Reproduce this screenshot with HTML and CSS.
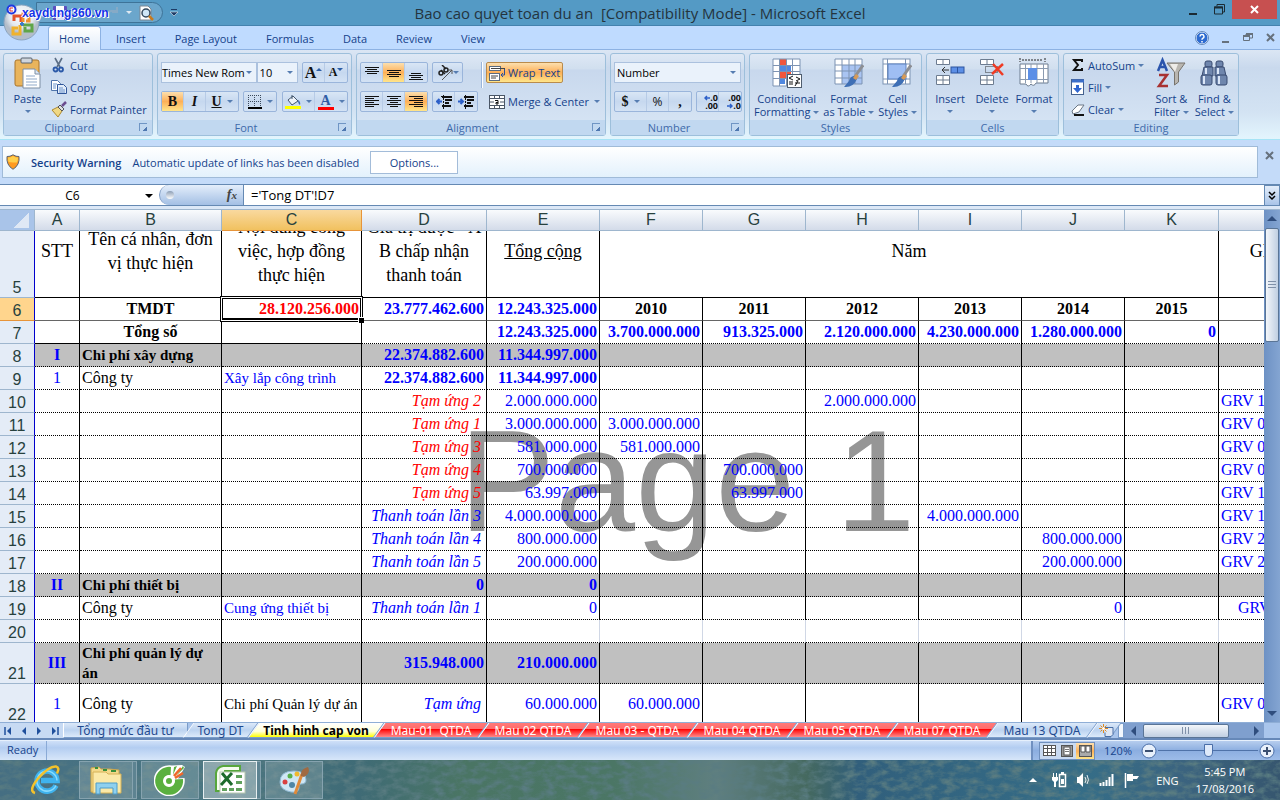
FILE: index.html
```
<!DOCTYPE html>
<html lang="en">
<head>
  <meta charset="UTF-8" />
  <meta name="viewport" content="width=device-width, initial-scale=1.0" />
  <title>Bao cao quyet toan du an - Microsoft Excel</title>
  <link rel="stylesheet" href="styles.css">
</head>
<body>

  <!-- Title bar -->
  <header class="titlebar">
    <div class="qat">
      <button aria-label="Save"><svg width="16" height="16" viewBox="0 0 16 16"><rect x="1" y="1" width="14" height="14" rx="1" fill="#5b4fc0"/><rect x="4" y="1" width="8" height="6" fill="#fff"/><rect x="4" y="10" width="8" height="5" fill="#d9ddf2"/></svg></button>
      <button aria-label="Undo"><svg width="16" height="16" viewBox="0 0 16 16"><path d="M4 7h6a3 3 0 0 1 0 6M7 3L3 7l4 4" fill="none" stroke="#6f9cc4" stroke-width="2"/></svg></button>
      <button aria-label="Redo"><svg width="16" height="16" viewBox="0 0 16 16"><path d="M13 6H7a4 4 0 0 0-2 7M13 2v5H8" fill="none" stroke="#86aac6" stroke-width="2"/></svg></button>
      <i class="arrow pale"></i>
      <button aria-label="Print preview"><svg width="16" height="16" viewBox="0 0 16 16"><path d="M2 1h8l3 3v11H2z" fill="#fff" stroke="#7b8794"/><circle cx="8" cy="8" r="4" fill="#cfe6f7" stroke="#34495e" stroke-width="1.5"/><path d="M11 11l4 4" stroke="#c87a1c" stroke-width="2.5"/></svg></button>
    </div>
    <button class="qat-more" aria-label="Customize Quick Access Toolbar"><svg width="8" height="8"><path d="M1 .5h6" stroke="#1d3b66"/><path d="M0 3h8L4 7z" fill="#1d3b66" stroke="#fff" stroke-width=".5"/></svg></button>
    <h1>Bao cao quyet toan du an &nbsp;[Compatibility Mode] - Microsoft Excel</h1>
    <div class="win-buttons">
      <button aria-label="Minimize"><svg width="10" height="12"><path d="M1 10h8" stroke="#1b2a33" stroke-width="2"/></svg></button>
      <button aria-label="Restore"><svg width="11" height="11"><path d="M3 2V.5h7.500V8H9M.5 3h8v7h-8z" fill="none" stroke="#1b2a33"/><path d="M0 3.500h9" stroke="#1b2a33" stroke-width="2"/></svg></button>
      <button class="close" aria-label="Close"><svg width="9" height="9"><path d="M1 1l7 7M8 1L1 8" stroke="#fff" stroke-width="2"/></svg></button>
    </div>
  </header>

  <button class="orb" aria-label="Office Button">
    <svg width="37" height="37" viewBox="0 0 37 37">
      <defs><radialGradient id="orbFill" cx=".5" cy=".3"><stop offset="0" stop-color="#fff"/><stop offset=".7" stop-color="#e3e8ee"/><stop offset="1" stop-color="#b3bdc9"/></radialGradient></defs>
      <circle cx="18.500" cy="18.500" r="17.500" fill="url(#orbFill)" stroke="#8ba4bf"/>
      <g fill="none" stroke-width="3">
        <path d="M11 17v-5h7v6" stroke="#e2542a"/><path d="M20 18v-8h6v7h-3" stroke="#f0922c"/>
        <path d="M17 21v9H10v-6h5" stroke="#f0b22c"/><path d="M20 21h9v6h-7v-4" stroke="#5fa548"/>
      </g>
      <path d="M17 20h4M19 18v4" stroke="#3d7cc9" stroke-width="2"/>
    </svg>
  </button>
  <div class="site-mark"><svg width="11" height="11" viewBox="0 0 11 11"><circle cx="5.500" cy="5.500" r="4" fill="#fff" stroke="#2038e0" stroke-width="2"/><path d="M7 4H4v3h3" fill="none" stroke="#e03030"/></svg><span>xaydung360.vn</span></div>

  <!-- Ribbon tabs -->
  <nav class="ribbon-tabs">
    <button class="active">Home</button>
    <button>Insert</button>
    <button>Page Layout</button>
    <button>Formulas</button>
    <button>Data</button>
    <button>Review</button>
    <button>View</button>
    <div class="doc-buttons">
      <button aria-label="Help"><svg width="14" height="14" viewBox="0 0 14 14"><circle cx="7" cy="7" r="6" fill="#2d6bd0" stroke="#eaf3ff"/><circle cx="7" cy="7" r="6.500" fill="none" stroke="#4a72a8" stroke-width=".8"/><path d="M5 5.500a2 2 0 1 1 2.500 2Q7 8 7 8.800M7 10v1.500" fill="none" stroke="#fff" stroke-width="1.500"/></svg></button>
      <button aria-label="Minimize workbook"><svg width="8" height="10"><path d="M0 9h7" stroke="#66717d" stroke-width="2"/></svg></button>
      <button aria-label="Restore workbook"><svg width="10" height="9"><path d="M.5 3h6v4.500h-6zM3 2.500V1h6.500v4H7" fill="none" stroke="#66717d"/><path d="M0 3h7M3 1h7" stroke="#66717d" stroke-width="2"/></svg></button>
      <button aria-label="Close workbook"><svg width="9" height="9"><path d="M1 1l7 7M8 1L1 8" stroke="#66717d" stroke-width="2"/></svg></button>
    </div>
  </nav>

  <!-- Ribbon -->
  <div class="ribbon">
    <section class="group g-clipboard">
      <div class="group-body">
        <button class="big paste">
          <svg width="28" height="32" viewBox="0 0 28 32"><rect x="1" y="3" width="24" height="26" rx="2" fill="#e9b45c" stroke="#a9752c"/><rect x="7" y="1" width="11" height="5" rx="1" fill="#cfd5dc" stroke="#59636e"/><path d="M9 12h12l5 5v14H9z" fill="#fff" stroke="#7c8ea3"/><path d="M21 12v5h5" fill="#dbe6f3" stroke="#7c8ea3"/><path d="M12 19h9M12 22h11M12 25h11M12 28h11" stroke="#8fa9c9"/></svg>
          <span>Paste</span><i class="arrow"></i>
        </button>
        <div class="stack">
          <button class="small"><svg width="16" height="16" viewBox="0 0 16 16"><path d="M4 1l5 9M11 1L6 10" stroke="#5c6f86" stroke-width="1.600"/><circle cx="4.500" cy="12.500" r="2" fill="none" stroke="#2b59a8" stroke-width="1.800"/><circle cx="10" cy="12.500" r="2" fill="none" stroke="#2b59a8" stroke-width="1.800"/></svg>Cut</button>
          <button class="small"><svg width="16" height="16" viewBox="0 0 16 16"><path d="M.5 1.500h6l3 3v7h-9z" fill="#fff" stroke="#4f74ab"/><path d="M6.500 5.500h6l3 3v6h-9z" fill="#e3edfa" stroke="#2f569a"/><path d="M2 5h4M2 7h3M2 9h3M8 9h4M8 11h6M8 13h6" stroke="#6b93cb"/></svg>Copy</button>
          <button class="small"><svg width="16" height="16" viewBox="0 0 16 16"><path d="M1 9l6-3 4 4-4 6z" fill="#f0d884" stroke="#b08a2e"/><path d="M7 6l2-2 4 4-2 2z" fill="#dcdfe4" stroke="#555"/><path d="M11 5l4-4" stroke="#6b4c8f" stroke-width="2.500"/></svg>Format Painter</button>
        </div>
      </div>
      <footer>Clipboard<i class="launcher"></i></footer>
    </section>

    <section class="group g-font">
      <div class="group-body rows">
        <div class="row">
          <span class="combo font-name"><select aria-label="Font"><option>Times New Rom</option></select></span>
          <span class="combo font-size"><select aria-label="Font Size"><option>10</option></select></span>
          <div class="btn-set push">
            <button class="serif grow" aria-label="Grow Font">A<svg width="6" height="12"><path d="M0 4h6L3 1z" fill="#2c5fa8"/></svg></button>
            <button class="serif shrink" aria-label="Shrink Font">A<svg width="6" height="12"><path d="M0 1h6L3 4z" fill="#2c5fa8"/></svg></button>
          </div>
        </div>
        <div class="row">
          <div class="btn-set">
            <button class="serif on">B</button>
            <button class="serif it">I</button>
            <button class="serif un wide"><u>U</u><i class="arrow"></i></button>
          </div>
          <div class="btn-set">
            <button class="wide" aria-label="Borders"><svg width="14" height="14"><path d="M.5 0v12M6.500 0v12M12.500 0v12M0 .5h13M0 6.500h13" stroke="#3b4a5c" stroke-dasharray="1 1"/><path d="M0 13h14" stroke="#000" stroke-width="2"/></svg><i class="arrow"></i></button>
          </div>
          <div class="btn-set push">
            <button class="wide" aria-label="Fill Color"><svg width="16" height="16"><path d="M3 6l5-4 5 5-6 4z" fill="#eef3fa" stroke="#43566d"/><path d="M7 5V1" stroke="#43566d"/><path d="M13 6q3 2 2 5-2-1-2-5" fill="#3d6cb5"/><path d="M0 13.500h16" stroke="#ff0" stroke-width="3"/></svg><i class="arrow"></i></button>
            <button class="wide serif" aria-label="Font Color"><span class="font-color">A</span><i class="arrow"></i></button>
          </div>
        </div>
      </div>
      <footer>Font<i class="launcher"></i></footer>
    </section>

    <section class="group g-align">
      <div class="group-body rows">
        <div class="row">
          <div class="btn-set">
            <button aria-label="Top Align"><svg width="14" height="14"><path d="M0 1.500h14M2 3.500h10M0 5.500h14M2 7.500h10" stroke="#111"/></svg></button>
            <button class="on" aria-label="Middle Align"><svg width="14" height="14"><path d="M0 4.500h14M2 6.500h10M0 8.500h14M2 10.500h10" stroke="#111"/></svg></button>
            <button aria-label="Bottom Align"><svg width="14" height="14"><path d="M2 7.500h10M0 9.500h14M2 11.500h10M0 13.500h14" stroke="#111"/></svg></button>
          </div>
          <div class="btn-set">
            <button class="wide-s" aria-label="Orientation"><svg width="16" height="16"><g fill="none" stroke="#222" stroke-width="1.500"><circle cx="4" cy="8" r="2"/><path d="M4 5l4 4"/><circle cx="9" cy="5" r="2"/><path d="M5 0l4 4"/></g><path d="M5 15L15 5M11 5h4v4" fill="none" stroke="#555"/></svg><i class="arrow"></i></button>
          </div>
          <i class="divider"></i>
          <button class="text-btn on"><svg width="16" height="16"><path d="M0 1.500h11M0 5.500h11" stroke="#333"/><rect x=".5" y="1.500" width="11" height="4" fill="#fff" stroke="#5a6b80"/><rect x=".5" y="8.500" width="10" height="7" fill="#fff" stroke="#5a6b80"/><path d="M2 3.500h14M2 11h7M2 13h5" stroke="#444"/><path d="M15.500 4v6h-3M14 8l-2 2 2 2" fill="none" stroke="#2c4f9c"/></svg>Wrap Text</button>
        </div>
        <div class="row">
          <div class="btn-set">
            <button aria-label="Align Left"><svg width="14" height="12"><path d="M0 .5h14M0 2.500h9M0 4.500h14M0 6.500h9M0 8.500h14M0 10.500h9" stroke="#111"/></svg></button>
            <button aria-label="Center"><svg width="14" height="12"><path d="M0 .5h14M3 2.500h8M0 4.500h14M3 6.500h8M0 8.500h14M3 10.500h8" stroke="#111"/></svg></button>
            <button class="on" aria-label="Align Right"><svg width="14" height="12"><path d="M0 .5h14M5 2.500h9M0 4.500h14M5 6.500h9M0 8.500h14M5 10.500h9" stroke="#111"/></svg></button>
          </div>
          <div class="btn-set">
            <button aria-label="Decrease Indent"><svg width="16" height="14"><path d="M5 1.500h11M7.500 0v14" stroke="#111" stroke-dasharray="2 1"/><path d="M6 2h10M9 5h7M9 8h4M6 11h9" stroke="#111" stroke-width="2"/><path d="M6 6.500H1M3.500 4L1 6.500 3.500 9" fill="none" stroke="#2c5fc8" stroke-width="2"/></svg></button>
            <button aria-label="Increase Indent"><svg width="16" height="14"><path d="M7.500 0v14" stroke="#111" stroke-dasharray="2 1"/><path d="M6 2h10M9 5h7M9 8h4M6 11h9" stroke="#111" stroke-width="2"/><path d="M0 6.500h5M2.500 4L5 6.500 2.500 9" fill="none" stroke="#2c5fc8" stroke-width="2"/></svg></button>
          </div>
          <i class="divider"></i>
          <button class="text-btn"><svg width="16" height="14"><rect x=".5" y=".5" width="15" height="13" fill="#fff" stroke="#4a5666"/><path d="M0 3.500h16M0 10.500h16M5.500 0v3M10.500 0v3M5.500 11v3M10.500 11v3M1 7h4M11 7h4" stroke="#4a5666"/><path d="M6 5.500h3V9H7V7.500h2" fill="none" stroke="#111"/></svg>Merge &amp; Center<i class="arrow"></i></button>
        </div>
      </div>
      <footer>Alignment<i class="launcher"></i></footer>
    </section>

    <section class="group g-number">
      <div class="group-body rows">
        <div class="row">
          <span class="combo num-format"><select aria-label="Number Format"><option>Number</option></select></span>
        </div>
        <div class="row">
          <div class="btn-set">
            <button class="wide serif">$<i class="arrow"></i></button>
            <button class="sign">%</button>
            <button class="serif sign-comma">,</button>
          </div>
          <div class="btn-set">
            <button class="decimals" aria-label="Increase Decimal"><span><svg width="6" height="6"><path d="M6 3H1M3 1L1 3l2 2" fill="none" stroke="#2c5fc8" stroke-width="1.500"/></svg>.0</span><span>.00</span></button>
            <button class="decimals" aria-label="Decrease Decimal"><span>.00</span><span><svg width="6" height="6"><path d="M0 3h5M3 1l2 2-2 2" fill="none" stroke="#2c5fc8" stroke-width="1.500"/></svg>.0</span></button>
          </div>
        </div>
      </div>
      <footer>Number<i class="launcher"></i></footer>
    </section>

    <section class="group g-styles">
      <div class="group-body">
        <button class="big">
          <svg width="30" height="30" viewBox="0 0 30 30"><rect x="1" y="1" width="27" height="27" fill="#fff"/><path d="M7 1h7v6H7zM7 13h12v7H7z" fill="#f0563c"/><path d="M7 7h12v6H7zM7 20h6v6H7z" fill="#5088e0"/><path d="M1 1h27v27H1zM1 7.500h27M1 13.500h27M1 20.500h27M7.500 1v27M14.500 1v27M20.500 1v27" fill="none" stroke="#7d93b3"/><rect x="15.500" y="16.500" width="14" height="13" fill="#fff" stroke="#4f5d6e"/><path d="M21 18l-4 2 4 2M17 24h4M24 19l4 2-4 2M23 25h5M26 23l-3 5M17 26h4" fill="none" stroke="#111"/></svg>
          <span>Conditional<br>Formatting <i class="arrow"></i></span>
        </button>
        <button class="big">
          <svg width="30" height="30" viewBox="0 0 30 30"><rect x="1" y="1" width="27" height="25" fill="#fff"/><path d="M8 7h20v19H8z" fill="#a9c4f2"/><path d="M1 1h27v25H1zM1 7h27M1 13h27M1 20h27M8 1v25M15 1v25M21 1v25" fill="none" stroke="#7d93b3"/><path d="M29 7L20 20" stroke="#8d8f94" stroke-width="3"/><path d="M21 18q-5 0-6 5l-5 6q9 1 13-8z" fill="#3f6fb5"/><path d="M22 16l-3 4 3 2 3-4z" fill="#d79a56"/></svg>
          <span>Format<br>as Table <i class="arrow"></i></span>
        </button>
        <button class="big">
          <svg width="30" height="30" viewBox="0 0 30 30"><rect x="1" y="1" width="27" height="25" fill="#fff" stroke="#7d93b3"/><path d="M1 6h27M1 21h27M5.500 1v25M23.500 1v25" stroke="#7d93b3"/><rect x="6" y="6" width="18" height="15" fill="#9fbef3" stroke="#5d82c0"/><path d="M29 7L20 20" stroke="#8d8f94" stroke-width="3"/><path d="M21 18q-5 0-6 5l-5 6q9 1 13-8z" fill="#3f6fb5"/><path d="M22 16l-3 4 3 2 3-4z" fill="#d79a56"/></svg>
          <span>Cell<br>Styles <i class="arrow"></i></span>
        </button>
      </div>
      <footer>Styles</footer>
    </section>

    <section class="group g-cells">
      <div class="group-body">
        <button class="big">
          <svg width="30" height="30" viewBox="0 0 30 30"><path d="M1.500 1.500h13v5h-13zM1.500 17.500h13v9h-13zM8 1v6M8 17v10M1 22h14" fill="#fff" stroke="#6d7c90"/><rect x="16" y="9" width="13" height="6" fill="#5c8fe6" stroke="#2c55a0"/><path d="M22.500 9v6" stroke="#2c55a0"/><path d="M14 12H7M10 9l-3 3 3 3" fill="none" stroke="#333"/></svg>
          <span>Insert</span><i class="arrow"></i>
        </button>
        <button class="big">
          <svg width="30" height="30" viewBox="0 0 30 30"><path d="M3.500 1.500h13v5h-13zM3.500 17.500h13v9h-13zM10 1v6M10 17v10M3 22h14" fill="#fff" stroke="#6d7c90"/><rect x="8.500" y="8.500" width="12" height="6" fill="none" stroke="#333" stroke-dasharray="1 1"/><path d="M16 6l10 11M26 6L15 16" stroke="#ef3b24" stroke-width="2.500"/></svg>
          <span>Delete</span><i class="arrow"></i>
        </button>
        <button class="big">
          <svg width="30" height="30" viewBox="0 0 30 30"><path d="M1 0v4M26 0v4M3 2h21" stroke="#222" stroke-dasharray="2 1"/><path d="M1 6h28v19H17q-2 4-5 1-3 4-5 0H1z" fill="#fff" stroke="#6d7c90"/><path d="M1 10.500h28M1 21.500h28M6.500 6v19M12 6v19M18 6v19M24.500 6v19" stroke="#8a9ab0"/><rect x="9" y="10" width="9" height="12" fill="#5c8fe6"/></svg>
          <span>Format</span><i class="arrow"></i>
        </button>
      </div>
      <footer>Cells</footer>
    </section>

    <section class="group g-editing">
      <div class="group-body">
        <div class="stack">
          <button class="small"><svg width="14" height="14"><path d="M11 4V2H3l4 5-4 5h8v-2" fill="none" stroke="#111" stroke-width="2"/></svg>AutoSum <i class="arrow"></i></button>
          <button class="small"><svg width="14" height="16"><rect x=".5" y=".5" width="12" height="15" fill="#fff" stroke="#44618f"/><path d="M1 2h12" stroke="#3c6fca" stroke-width="3"/><path d="M5 6h3v3h3l-4.500 5L2 9h3z" fill="#2f66d0"/></svg>Fill <i class="arrow"></i></button>
          <button class="small"><svg width="14" height="14"><path d="M1 9l6-6h6l-5 7-6 2z" fill="#fff" stroke="#6b7786"/><path d="M3 13h10" stroke="#111" stroke-width="2"/></svg>Clear <i class="arrow"></i></button>
        </div>
        <button class="big">
          <svg width="30" height="30" viewBox="0 0 30 30"><g fill="none" stroke-width="2.500"><path d="M2 13L6.500 2 11 13M4 9h6" stroke="#2b55ad"/><path d="M3 17h8L3 28h9" stroke="#a83232"/></g><path d="M11 5h18l-6.500 9v10l-4 3V14z" fill="#b9b6b0" stroke="#77736c"/><path d="M14 6h8l-3 8z" fill="#eeece8"/></svg>
          <span>Sort &amp;<br>Filter <i class="arrow"></i></span>
        </button>
        <button class="big">
          <svg width="30" height="30" viewBox="0 0 30 30"><g fill="#6f86ad" stroke="#394b70"><rect x="6" y="3" width="7" height="6" rx="2"/><rect x="17" y="3" width="7" height="6" rx="2"/><path d="M5 9h9v9H3zM16 9h9l2 9H16z"/><rect x="2" y="17" width="11" height="10" rx="2"/><rect x="17" y="17" width="11" height="10" rx="2"/></g><path d="M5 18v8M20 18v8M7 10v6M19 10v6" stroke="#dbe6f7" stroke-width="2"/></svg>
          <span>Find &amp;<br>Select <i class="arrow"></i></span>
        </button>
      </div>
      <footer>Editing</footer>
    </section>
  </div>

  <!-- Message bar -->
  <div class="message-bar">
    <div class="message">
      <svg width="14" height="16" viewBox="0 0 14 16"><path d="M7 .8q3 2 6 1.700Q14 11 7 15.300 0 11 1 2.500 4 2.800 7 .8z" fill="#ff9a1f" stroke="#5b6672"/><path d="M7 2q2 1.500 5 1.500 0 3-1 5H7L2.500 8Q2 6 2 3.500 5 3.500 7 2z" fill="#ffcf4a"/></svg>
      <strong>Security Warning</strong>
      <span>Automatic update of links has been disabled</span>
      <button>Options...</button>
    </div>
    <button class="dismiss" aria-label="Close message"><svg width="9" height="9"><path d="M1 1l7 7M8 1L1 8" stroke="#66717d" stroke-width="2"/></svg></button>
  </div>

  <!-- Formula bar -->
  <div class="formula-bar">
    <div class="name-box"><input type="text" value="C6" aria-label="Name Box"><i class="arrow black"></i></div>
    <div class="fx"><i class="dot"></i><em>f<small>x</small></em></div>
    <input class="formula" type="text" value="='Tong DT'!D7" aria-label="Formula Bar">
    <button class="expand" aria-label="Expand Formula Bar"><svg width="8" height="9"><path d="M1 1l3 3 3-3M1 5l3 3 3-3" fill="none" stroke="#000" stroke-width="1.500"/></svg></button>
  </div>

  <!-- Worksheet -->
  <main class="workspace">
    <div class="sheet">
      <div class="page-mark">Page 1</div>
      <table>
        <colgroup>
          <col class="c-head"><col class="c-a"><col class="c-b"><col class="c-c"><col class="c-d"><col class="c-e">
          <col class="c-f"><col class="c-f"><col class="c-e"><col class="c-f"><col class="c-f"><col class="c-k"><col class="c-l">
        </colgroup>
        <thead>
          <tr><th class="corner"></th><th>A</th><th>B</th><th class="sel">C</th><th>D</th><th>E</th><th>F</th><th>G</th><th>H</th><th>I</th><th>J</th><th>K</th><th></th></tr>
        </thead>
        <tbody>
          <tr class="titles">
            <th>5</th>
            <td><div>STT</div></td>
            <td><div>Tên cá nhân, đơn vị thực hiện</div></td>
            <td><div>Nội dung công việc, hợp đồng thực hiện</div></td>
            <td><div>Giá trị được - A B chấp nhận thanh toán</div></td>
            <td><div><u>Tổng cộng</u></div></td>
            <td colspan="6"><div>Năm</div></td>
            <td><div>GHI CHÚ</div></td>
          </tr>
          <tr class="years"><th class="sel">6</th><td></td><td>TMDT</td><td class="cursor num red">28.120.256.000</td><td class="num">23.777.462.600</td><td class="num">12.243.325.000</td><td>2010</td><td>2011</td><td>2012</td><td>2013</td><td>2014</td><td>2015</td><td></td></tr>
          <tr class="total"><th>7</th><td></td><td>Tổng số</td><td></td><td></td><td>12.243.325.000</td><td>3.700.000.000</td><td>913.325.000</td><td>2.120.000.000</td><td>4.230.000.000</td><td>1.280.000.000</td><td>0</td><td></td></tr>
          <tr class="section"><th>8</th><td>I</td><td>Chi phí xây dựng</td><td></td><td>22.374.882.600</td><td>11.344.997.000</td><td></td><td></td><td></td><td></td><td></td><td></td><td></td></tr>
          <tr><th>9</th><td>1</td><td>Công ty</td><td>Xây lắp công trình</td><td class="bold">22.374.882.600</td><td class="bold">11.344.997.000</td><td></td><td></td><td></td><td></td><td></td><td></td><td></td></tr>
          <tr><th>10</th><td></td><td></td><td></td><td class="note red">Tạm ứng 2</td><td>2.000.000.000</td><td></td><td></td><td>2.000.000.000</td><td></td><td></td><td></td><td>GRV 1</td></tr>
          <tr><th>11</th><td></td><td></td><td></td><td class="note red">Tạm ứng 1</td><td>3.000.000.000</td><td>3.000.000.000</td><td></td><td></td><td></td><td></td><td></td><td>GRV 0</td></tr>
          <tr><th>12</th><td></td><td></td><td></td><td class="note red">Tạm ứng 3</td><td>581.000.000</td><td>581.000.000</td><td></td><td></td><td></td><td></td><td></td><td>GRV 0</td></tr>
          <tr><th>13</th><td></td><td></td><td></td><td class="note red">Tạm ứng 4</td><td>700.000.000</td><td></td><td>700.000.000</td><td></td><td></td><td></td><td></td><td>GRV 0</td></tr>
          <tr><th>14</th><td></td><td></td><td></td><td class="note red">Tạm ứng 5</td><td>63.997.000</td><td></td><td>63.997.000</td><td></td><td></td><td></td><td></td><td>GRV 1</td></tr>
          <tr><th>15</th><td></td><td></td><td></td><td class="note">Thanh toán lần 3</td><td>4.000.000.000</td><td></td><td></td><td></td><td>4.000.000.000</td><td></td><td></td><td>GRV 1</td></tr>
          <tr><th>16</th><td></td><td></td><td></td><td class="note">Thanh toán lần 4</td><td>800.000.000</td><td></td><td></td><td></td><td></td><td>800.000.000</td><td></td><td>GRV 2</td></tr>
          <tr><th>17</th><td></td><td></td><td></td><td class="note">Thanh toán lần 5</td><td>200.000.000</td><td></td><td></td><td></td><td></td><td>200.000.000</td><td></td><td>GRV 2</td></tr>
          <tr class="section"><th>18</th><td>II</td><td>Chi phí thiết bị</td><td></td><td>0</td><td>0</td><td></td><td></td><td></td><td></td><td></td><td></td><td></td></tr>
          <tr><th>19</th><td></td><td>Công ty</td><td>Cung ứng thiết bị</td><td class="note">Thanh toán lần 1</td><td>0</td><td></td><td></td><td></td><td></td><td>0</td><td></td><td class="indent">GRV</td></tr>
          <tr class="blank"><th>20</th><td></td><td></td><td></td><td></td><td></td><td></td><td></td><td></td><td></td><td></td><td></td><td></td></tr>
          <tr class="section tall"><th>21</th><td>III</td><td>Chi phí quản lý dự án</td><td></td><td>315.948.000</td><td>210.000.000</td><td></td><td></td><td></td><td></td><td></td><td></td><td></td></tr>
          <tr class="tall"><th>22</th><td>1</td><td>Công ty</td><td class="black">Chi phí Quản lý dự án</td><td class="note">Tạm ứng</td><td>60.000.000</td><td>60.000.000</td><td></td><td></td><td></td><td></td><td></td><td>GRV 0</td></tr>
        </tbody>
      </table>
    </div>
    <div class="vscroll">
      <i class="tri up"></i>
      <div class="thumb"></div>
      <i class="tri down"></i>
    </div>
  </main>

  <!-- Sheet tabs -->
  <div class="tab-bar">
    <div class="tab-nav">
      <button aria-label="First sheet"><svg width="8" height="8"><path d="M1 0v8" stroke="#1f4f9c" stroke-width="1.500"/><path d="M7 0v8L3 4z" fill="#1f4f9c"/></svg></button>
      <button aria-label="Previous sheet"><svg width="8" height="8"><path d="M6 0v8L2 4z" fill="#1f4f9c"/></svg></button>
      <button aria-label="Next sheet"><svg width="8" height="8"><path d="M2 0v8l4-4z" fill="#1f4f9c"/></svg></button>
      <button aria-label="Last sheet"><svg width="8" height="8"><path d="M7 0v8" stroke="#1f4f9c" stroke-width="1.500"/><path d="M1 0v8l4-4z" fill="#1f4f9c"/></svg></button>
    </div>
    <button class="tab first">Tổng mức đầu tư</button>
    <button class="tab short">Tong DT</button>
    <button class="tab current">Tinh hinh cap von</button>
    <button class="tab hot">Mau-01&nbsp; QTDA</button>
    <button class="tab hot">Mau 02 QTDA</button>
    <button class="tab hot long">Mau 03 - QTDA</button>
    <button class="tab hot">Mau 04 QTDA</button>
    <button class="tab hot">Mau 05 QTDA</button>
    <button class="tab hot">Mau 07 QTDA</button>
    <button class="tab">Mau 13 QTDA</button>
    <button class="tab new" aria-label="Insert Worksheet"><svg width="16" height="13"><path d="M5 3.500h9v7l-2 2H6v-4" fill="#dfe8f5" stroke="#4a6fa5"/><path d="M4.500 0v9M0 4.500h9M1.500 1.500l6 6M7.500 1.500l-6 6" stroke="#e08a1e"/><circle cx="4.500" cy="4.500" r="1.500" fill="#fff"/></svg></button>
    <i class="splitter"></i>
    <div class="hscroll">
      <i class="tri left"></i>
      <div class="thumb"></div>
      <i class="tri right"></i>
    </div>
  </div>

  <!-- Status bar -->
  <div class="status-bar">
    <span class="ready">Ready</span>
    <div class="status-right">
      <div class="views">
        <button aria-label="Normal"><svg width="13" height="11"><rect x=".5" y=".5" width="12" height="10" fill="#fff" stroke="#555"/><path d="M0 3.500h13M0 7.500h13M4.500 0v11M8.500 0v11" stroke="#555"/></svg></button>
        <button aria-label="Page Layout"><svg width="12" height="12"><rect x=".5" y=".5" width="11" height="11" fill="#999" stroke="#555"/><rect x="3" y="2" width="6" height="8" fill="#fff" stroke="#555"/><path d="M4 4.500h4M4 6.500h4" stroke="#777"/></svg></button>
        <button class="on" aria-label="Page Break Preview"><svg width="13" height="12"><rect x=".5" y=".5" width="12" height="11" fill="#aaa" stroke="#555"/><path d="M2 1h4v6H2zM7 1h4v6H7z" fill="#fff" stroke="#555"/></svg></button>
      </div>
      <span>120%</span>
      <button class="zoom-btn" aria-label="Zoom out"><svg width="16" height="16"><circle cx="8" cy="8" r="7" fill="#e8f0fb" stroke="#4a6ea8"/><path d="M4 8h8" stroke="#3b4f70" stroke-width="2"/></svg></button>
      <input type="range" min="0" max="100" value="51" aria-label="Zoom">
      <button class="zoom-btn" aria-label="Zoom in"><svg width="16" height="16"><circle cx="8" cy="8" r="7" fill="#e8f0fb" stroke="#4a6ea8"/><path d="M4 8h8M8 4v8" stroke="#3b4f70" stroke-width="2"/></svg></button>
    </div>
  </div>

  <!-- Windows taskbar -->
  <footer class="taskbar">
    <svg class="wallpaper" width="100%" height="40" aria-hidden="true">
      <filter id="leaves" x="0" y="0" width="100%" height="100%"><feTurbulence type="fractalNoise" baseFrequency=".09 .16" numOctaves="4" seed="8"/><feColorMatrix values="0 0 0 0 .1  0 0 0 0 .2  0 0 0 0 .22  2.4 0 0 0 -.95"/></filter>
      <rect width="100%" height="40" filter="url(#leaves)"/>
    </svg>
    <button class="task plain" aria-label="Internet Explorer"><svg width="30" height="32" viewBox="0 0 30 32"><path d="M25 21.500A10 10 0 1 1 26 16.500H10" fill="none" stroke="#3fb3ee" stroke-width="5.500"/><path d="M25 21.500A10 10 0 1 1 26 16.500" fill="none" stroke="#8adcff" stroke-width="1.500"/><path d="M4 29Q-3 27 7 14.500 18 2 25 2.500q4 1 1 7" fill="none" stroke="#f4c22b" stroke-width="2.500"/></svg></button>
    <button class="task stacked" aria-label="File Explorer"><svg width="34" height="30" viewBox="0 0 34 30"><path d="M2 3l8-1 2 2h8l10 1v22H2z" fill="#f3d889" stroke="#c9a54a"/><path d="M4 7h13l2 2h13v19H4z" fill="#fbe9a8" stroke="#d5b257"/><path d="M6 3h3M14 5h4M22 6h5" stroke="#3a8f3a" stroke-width="2"/><path d="M7 29V18h21v11h-4v-6H11v6z" fill="#8fd0ef" stroke="#4f9cc8"/></svg></button>
    <button class="task" aria-label="Coc Coc"><svg width="32" height="32" viewBox="0 0 32 32"><path d="M18 1.500A15.500 15.500 0 1 0 30.500 14L24 14.500 31 3l-3-2z" fill="#fff"/><path d="M17 3A14 14 0 1 0 29 15L20.500 15.500A5.500 5.500 0 1 1 16.500 11.500z" fill="#5ab03f"/><circle cx="15" cy="17" r="4.500" fill="#5ab03f" stroke="#fff" stroke-width="3"/><path d="M19 11l1-8 3-1zM22 12l7-10 1 2z" fill="#5ab03f"/><path d="M20 12l7-8M21 14l8-5" stroke="#f0682a" stroke-width="2.500"/></svg></button>
    <button class="task stacked current" aria-label="Excel"><svg width="32" height="30" viewBox="0 0 32 30"><path d="M2 8q1-6 7-7h17v5H11l-2 20H2z" fill="#f4fbef" stroke="#57a63c" stroke-width="2"/><rect x="6" y="7" width="25" height="21" fill="#fff" stroke="#b7c9b0"/><path d="M22 10h6v3h-6zM22 16h6v3h-6zM8 23h5v3H8zM15 23h5v3h-5zM22 23h6v3h-6z" fill="#5fa05c"/><path d="M8 8l10 12M18 8L7 20" stroke="#1d6b2c" stroke-width="3"/></svg></button>
    <button class="task" aria-label="Paint"><svg width="32" height="30" viewBox="0 0 32 30"><path d="M2 17Q2 6 16 6q12 0 12 9 0 4-5 4-3 0-2 4 0 5-8 4Q2 25 2 17z" fill="#cfe7f5" stroke="#8fb9d3"/><circle cx="7" cy="17" r="2.500" fill="#d94040"/><circle cx="12" cy="11" r="2.500" fill="#58b04a"/><circle cx="19" cy="9" r="2.500" fill="#f0b92e"/><circle cx="14" cy="20" r="3" fill="#4f86a5"/><path d="M17 29l7-20" stroke="#e08a3a" stroke-width="3"/><path d="M23 11q-1-7 7-9 3 6-4 10z" fill="#a06a42"/></svg></button>
    <div class="tray">
      <i class="tri up"></i>
      <svg width="16" height="16" viewBox="0 0 16 16"><path d="M2.500 1v4M5.500 1v4" stroke="#fff"/><path d="M1 5h6v3L5 10v5H3v-5L1 8z" fill="#fff"/><rect x="8.500" y="2.500" width="6" height="12" fill="none" stroke="#fff" stroke-width="1.500"/><path d="M10 1h3" stroke="#fff" stroke-width="2"/><rect x="10" y="7" width="3" height="5" fill="#fff"/></svg>
      <svg width="14" height="14" viewBox="0 0 14 14"><path d="M1 4h2l4-4v14l-4-4H1z" fill="#fff"/><path d="M9 4q2 3 0 6M11 2q3 5 0 9" fill="none" stroke="#dfe9ee"/></svg>
      <svg width="16" height="12" viewBox="0 0 16 12"><path d="M1.500 12V9M4.500 12V8M7.500 12V6M10.500 12V3M13.500 12V0" stroke="#fff" stroke-width="2"/></svg>
      <svg width="16" height="15" viewBox="0 0 16 15"><path d="M1.500 0v15" stroke="#fff" stroke-width="1.500"/><path d="M3 1h6v2h6l-2 3h-4V8H3z" fill="#fff"/></svg>
      <span class="lang">ENG</span>
      <time>5:45 PM<br>17/08/2016</time>
    </div>
  </footer>

</body>
</html>
```
FILE: styles.css
```
* {
  box-sizing: border-box;
}

body {
  height: 100vh;
  margin: 0;
  display: flex;
  flex-direction: column;
  overflow: hidden;
  background: #bfdbff;
  color: #15428b;
  font-family: "Open Sans", "Noto Sans", sans-serif;
  font-size: 11px;
}

button {
  display: flex;
  align-items: center;
  justify-content: center;
  margin: 0;
  padding: 0;
  border: none;
  background: none;
  color: inherit;
  font: inherit;
  white-space: nowrap;
}

svg {
  display: block;
  flex: none;
}

.arrow {
  display: inline-block;
  flex: none;
  border: 3px solid transparent;
  border-top-color: #567db1;
  border-bottom: none;
}

.arrow.pale { border-top-color: #dfe9f2; }
.arrow.black { border-width: 4px 4px 0; border-top-color: #000; }

/* title bar */
.titlebar {
  display: flex;
  align-items: center;
  flex: none;
  height: 26px;
  background: #549ac5;
  border-bottom: 1px solid #4482ae;
}

.qat {
  display: flex;
  align-items: center;
  gap: 10px;
  height: 21px;
  margin-left: 36px;
  padding: 0 8px 0 15px;
  border: 1px solid #3e7398;
  border-radius: 0 11px 11px 0;
  background: #6ba6cc;
}

.qat .arrow {
  margin: 0 -4px;
}

.qat-more {
  margin-left: 7px;
}

.titlebar h1 {
  flex: 1;
  margin: 0 78px 0 0;
  text-align: center;
  color: #24343e;
  font-size: 15px;
  font-weight: normal;
  white-space: nowrap;
}

.win-buttons {
  display: flex;
  align-self: flex-start;
  margin-right: 3px;
}

.win-buttons button {
  width: 26px;
  height: 19px;
}

.win-buttons .close {
  width: 45px;
  background: #c75050;
}

.orb {
  position: absolute;
  left: 3px;
  top: 4px;
}

.site-mark {
  position: absolute;
  left: 6px;
  top: 4px;
  display: flex;
  gap: 5px;
  color: #1433e8;
  font: bold 12px/18px "Liberation Sans", sans-serif;
  text-shadow: 1px 1px 0 #fff, -1px 0 0 #fff;
}

/* ribbon tabs */
.ribbon-tabs {
  display: flex;
  flex: none;
  height: 24px;
  padding-left: 48px;
  border-bottom: 1px solid #8db2e3;
}

.ribbon-tabs > button {
  height: 24px;
  padding: 0 15px 0 14px;
}

.ribbon-tabs > .active {
  width: 53px;
  margin: 0 1px 0 0;
  padding: 0;
  border: 1px solid #8db2e3;
  border-bottom: none;
  border-radius: 3px 3px 0 0;
  background: linear-gradient(#fff, #e1ecf9);
}

.doc-buttons {
  display: flex;
  align-items: center;
  gap: 13px;
  margin-left: auto;
  padding-right: 5px;
}

/* ribbon */
.ribbon {
  display: flex;
  flex: none;
  gap: 4px;
  height: 90px;
  padding: 3px;
  border-bottom: 1px solid #a6e4f6;
  background: linear-gradient(#dbe6f4, #c9d9ed 20%, #d3e3f3 70%, #e3f5fd);
}

.group {
  display: flex;
  flex-direction: column;
  flex: none;
  border: 1px solid #9dbfdb;
  border-radius: 3px;
  background: linear-gradient(#dee8f5, #d1dfef 18%, #c8d8ed 20%, #d8e6f5);
}

.g-clipboard { width: 150px; }
.g-font { width: 195px; }
.g-align { width: 250px; }
.g-number { width: 135px; }
.g-styles { width: 173px; }
.g-cells { width: 133px; }
.g-editing { width: 176px; }

.group-body {
  display: flex;
  flex: 1;
}

.group footer {
  position: relative;
  height: 15px;
  background: #c1d8f0;
  color: #3e6aaa;
  line-height: 15px;
  text-align: center;
}

.g-clipboard footer,
.g-font footer,
.g-align footer,
.g-number footer {
  padding-right: 17px;
}

.launcher {
  position: absolute;
  right: 5px;
  top: 3px;
  width: 8px;
  height: 8px;
  border: 1px solid #6f95c4;
  border-width: 1px 0 0 1px;
  background: linear-gradient(135deg, transparent 60%, #4f78b0 60%) 100% 100% / 6px 6px no-repeat;
}

.rows {
  flex-direction: column;
  gap: 8px;
  padding: 8px 3px 0;
}

.row {
  display: flex;
  gap: 4px;
  height: 21px;
}

.combo {
  display: flex;
  align-items: center;
  border: 1px solid #abc1de;
  background: #eaf2fb;
}

.combo select {
  flex: 1;
  min-width: 0;
  height: 100%;
  padding: 0 0 0 2px;
  appearance: none;
  border: none;
  background: none;
  color: #000;
  font: inherit;
}

.combo::after {
  content: "";
  margin-right: 4px;
  border: 3px solid transparent;
  border-top-color: #567db1;
  border-bottom: none;
}

.font-name { width: 97px; }
.font-name select { padding: 0; }
.font-size { width: 42px; margin-left: -4px; }
.num-format { width: 127px; }
.push { margin-left: auto; }

.btn-set {
  display: flex;
  border: 1px solid #9ab5db;
  border-radius: 2px;
  background: linear-gradient(#d9e6f5, #c6d8ef 50%, #d3e2f4);
}

.btn-set button {
  width: 22px;
  border-right: 1px solid #b7cbe6;
}

.btn-set button:last-child {
  border-right: none;
}

.btn-set .wide {
  gap: 5px;
  width: 32px;
}

.btn-set .wide-s {
  width: 29px;
}

.on {
  background: linear-gradient(#fcdfae, #fdb058 50%, #ffe58a);
}

.serif {
  color: #111;
  font-family: "Liberation Serif", serif;
  font-size: 14px;
  font-weight: bold;
}

.it { font-style: italic; }
.grow { font-size: 16px; }
.shrink { font-size: 12px; }

.font-color {
  width: 16px;
  height: 16px;
  border-bottom: 3px solid #f00;
  color: #2f5ca5;
  line-height: 13px;
}

.divider {
  width: 1px;
  height: 26px;
  background: #9ab5db;
  box-shadow: 1px 0 0 #fff;
}

.g-align .row:first-child .divider {
  margin-left: 14px;
}

.text-btn {
  gap: 3px;
  padding: 0 3px;
}

.text-btn .arrow {
  margin-left: 2px;
}

.text-btn.on {
  padding: 0 2px;
  border: 1px solid #b98b4c;
  border-radius: 2px;
}

.sign {
  color: #111;
  font-size: 12px;
}

.decimals {
  flex-direction: column;
  align-items: flex-end;
  color: #111;
  font-size: 9px;
  font-weight: bold;
  line-height: 8px;
}

.decimals span {
  display: flex;
  align-items: center;
}

.big {
  flex-direction: column;
  justify-content: flex-start;
  padding: 3px 3px 0;
  line-height: 13px;
}

.big > svg {
  height: 32px;
  margin-bottom: 3px;
}

.big > .arrow {
  margin-top: 5px;
}

.big span .arrow {
  vertical-align: 2px;
}

.paste {
  width: 47px;
}

.g-styles .group-body,
.g-cells .group-body {
  padding-left: 2px;
}

.g-styles .big {
  padding: 3px 2px 0;
}

.g-cells .big {
  width: 42px;
}

.stack {
  display: flex;
  flex-direction: column;
}

.small {
  justify-content: flex-start;
  gap: 3px;
  height: 22px;
}

.g-editing .stack {
  width: 87px;
  padding-left: 7px;
}

/* message bar */
.message-bar {
  display: flex;
  flex: none;
  height: 44px;
  padding: 6px 0 6px 2px;
  background: #c4dbf9;
}

.message {
  display: flex;
  align-items: center;
  flex: 1;
  gap: 11px;
  padding-left: 3px;
  border: 1px solid #a0bbd8;
  background: linear-gradient(#fff, #e3f1fc);
}

.message strong {
  font-weight: 600;
}

.message button {
  width: 88px;
  height: 23px;
  border: 1px solid #a3bcd9;
  background: #fff;
}

.dismiss {
  align-self: flex-start;
  width: 22px;
  height: 18px;
}

/* formula bar */
.formula-bar {
  display: flex;
  flex: none;
  height: 25px;
  border-top: 1px solid #6589b3;
  border-bottom: 3px solid #dce8f7;
  background: #fff;
  box-shadow: inset 0 -1px 0 #6589b3;
}

.formula-bar input {
  min-width: 0;
  padding: 0;
  border: none;
  background: none;
  color: #000;
  font: inherit;
  font-size: 12px;
}

.name-box {
  display: flex;
  align-items: center;
  width: 159px;
}

.name-box input {
  flex: 1;
  padding-bottom: 1px;
  text-align: center;
}

.name-box .arrow {
  margin-right: 6px;
}

.fx {
  display: flex;
  align-items: center;
  justify-content: space-between;
  width: 85px;
  height: 20px;
  padding: 0 6px;
  border-left: 1px solid #7f9cc4;
  border-right: 1px solid #6589b3;
  border-radius: 10px 0 0 10px;
  background: linear-gradient(#e4eefb, #a3bfe4);
}

.fx em {
  color: #444;
  font: italic bold 14px "Liberation Serif", serif;
}

.fx small {
  font-size: 11px;
}

.dot {
  width: 8px;
  height: 8px;
  border-radius: 50%;
  background: linear-gradient(#8b9db5, #fff);
}

.formula-bar .formula {
  flex: 1;
  padding: 0 0 1px 7px;
  font-size: 13px;
}

.expand {
  width: 16px;
  border: 1px solid #6589b3;
  background: linear-gradient(#e4eefb, #a9c4e8);
}

/* worksheet */
.workspace {
  display: flex;
  flex: 1;
  min-height: 0;
  border-top: 1px solid #9eb6ce;
}

.sheet {
  position: relative;
  flex: 1;
  overflow: hidden;
  background: #fff;
}

.page-mark {
  position: absolute;
  left: 459px;
  top: 200px;
  color: #969696;
  font: 144px/144px "Liberation Sans", sans-serif;
  white-space: nowrap;
}

table {
  position: relative;
  width: 1356px;
  table-layout: fixed;
  border-collapse: separate;
  border-spacing: 0;
  color: #00f;
  font: 16px/20px "Liberation Serif", serif;
}

.c-head { width: 35px; }
.c-a { width: 45px; }
.c-b { width: 142px; }
.c-c { width: 140px; }
.c-d { width: 125px; }
.c-e { width: 113px; }
.c-f { width: 103px; }
.c-k { width: 94px; }
.c-l { width: 137px; }

th {
  padding: 0;
  color: #27413e;
  font: 16px/18px "Liberation Sans", sans-serif;
}

thead th {
  height: 21px;
  border-right: 1px solid #9eb6ce;
  border-bottom: 1px solid #9eb6ce;
  background: linear-gradient(#f9fbfd, #d3dbe9);
}

thead .sel {
  border-color: #e79439;
  background: linear-gradient(#f9d99f, #f1c15f);
}

thead .corner {
  background: linear-gradient(135deg, transparent 68%, #dfe8f5 68%) 0 0 / 29px 18px no-repeat, #a9c4e9;
}

tbody th {
  border-right: 1px solid #00c;
  border-bottom: 1px solid #9eb6ce;
  background: #e4ecf7;
  vertical-align: bottom;
}

tbody th.sel {
  border-bottom-color: #e79439;
  background: #ffd58d;
}

tbody tr {
  height: 23px;
}

td {
  padding: 0 2px;
  border-right: 1px solid #000;
  border-bottom: 1px dotted #000;
  text-align: right;
  white-space: nowrap;
}

td:nth-child(2) { text-align: center; }
td:nth-child(3) { color: #000; text-align: left; white-space: normal; }
td:nth-child(4),
td:nth-child(13) { text-align: left; }
td:nth-child(4) { font-size: 15px; }

.titles td:nth-child(n) {
  padding: 0;
  border-bottom: 1px solid #000;
  color: #000;
  font-size: 18px;
  line-height: 24px;
  text-align: center;
  white-space: normal;
}

/* the row is scrolled partly under the column letters */
.titles div {
  display: flex;
  align-items: center;
  justify-content: center;
  height: 66px;
  padding: 0 8px 26px;
  overflow: hidden;
}

.titles td:nth-child(2) div,
.titles td:nth-child(5) div {
  padding: 0 0 26px;
}

.years td,
.total td,
.section td,
.bold {
  font-weight: bold;
}

.years td {
  border-bottom: 1px solid #666;
  color: #000;
}

.years td:nth-child(n) { font-size: 16px; text-align: center; }
.years td.num { color: #00f; text-align: right; }
.total td:nth-child(3) { text-align: center; }
.total td:nth-child(-n+4) { border-bottom-style: solid; }
.section td { background: #c0c0c0; }
.section td:nth-child(3) { font-size: 15px; }

.years td.red,
.red {
  color: #f00;
}

.note {
  padding-right: 5px;
  font-style: italic;
}

td.black { color: #000; }
.indent { padding-left: 19px; }
.blank td:nth-child(n+6) { border-right-color: #d0d7e5; }

tbody .tall {
  height: 41px;
}

.cursor {
  position: relative;
}

/* selection frame and fill handle */
.cursor::before {
  content: "";
  position: absolute;
  inset: 0;
  border: 1px solid #000;
  border-bottom-width: 2px;
  outline: 1px solid #fff;
  box-shadow: 0 0 0 2px #000;
}

.cursor::after {
  content: "";
  position: absolute;
  right: -3px;
  bottom: -3px;
  z-index: 1;
  width: 5px;
  height: 5px;
  border: solid #fff;
  border-width: 1px 0 0 1px;
  background: #000;
}

/* scroll bars */
.vscroll {
  display: flex;
  flex-direction: column;
  align-items: center;
  width: 16px;
  padding: 6px 0;
  background: linear-gradient(90deg, #6d91c4, #84a5d2);
}

.vscroll .thumb {
  width: 14px;
  height: 114px;
  margin: 7px 0 auto;
  border: 1px solid #5a7596;
  border-radius: 2px;
  background: repeating-linear-gradient(#7f90a8 0 1px, transparent 1px 3px) 50% 50% / 8px 8px no-repeat, linear-gradient(90deg, #f3f6fa, #c0cfe2);
}

.tri {
  border: 5px solid transparent;
}

.tri.up { border-top: none; border-bottom-color: #2f4d7d; }
.tri.down { border-bottom: none; border-top-color: #2f4d7d; }
.tri.left { border-left: none; border-right-color: #2f4d7d; }
.tri.right { border-right: none; border-left-color: #2f4d7d; }

/* sheet tabs */
.tab-bar {
  display: flex;
  flex: none;
  height: 18px;
  padding-right: 16px;
  border-top: 1px solid #8faed6;
  border-bottom: 2px solid #6688b8;
  background: #a9c5ec;
}

.tab-nav {
  display: flex;
  align-items: center;
  justify-content: space-around;
  width: 63px;
  background: #c7daf3;
}

.tab {
  position: relative;
  z-index: 0;
  width: 100px;
  color: #1f4a8f;
  font-family: "Noto Sans", "Open Sans", sans-serif;
  font-size: 12px;
  line-height: 15px;
}

.tab::before {
  content: "";
  position: absolute;
  inset: 0;
  z-index: -1;
  border: 1px solid #7a9cc9;
  border-top: none;
  border-left-color: #fff;
  background: linear-gradient(#dce9f9, #bcd3f0 50%, #dceafa);
  transform: skewX(-36deg);
}

.first { width: 125px; }
.first::before { transform: none; }
.short { width: 65px; }
.current { width: 126px; color: #000; font-weight: bold; }
.current::before { background: linear-gradient(#fff, #ffffd8 60%, #ff0); }
.current + .tab { width: 104px; }
.long { width: 109px; }

.hot { color: #fff; }
.hot::before { background: linear-gradient(#ff7a7a, #ff6b6b 40%, #f00 45%, #ff2a2a 60%, #ff8a8a); }
.new { width: 24px; }
.new svg { margin-left: 6px; }

.splitter {
  width: 6px;
  margin-left: 2px;
  border: 1px solid #7a9cc9;
  background: #f2f7fd;
}

.hscroll {
  display: flex;
  align-items: center;
  flex: 1;
  padding: 0 5px 0 7px;
  background: #7f9fce;
}

.hscroll .thumb {
  width: 86px;
  height: 14px;
  margin: 0 auto 0 7px;
  border: 1px solid #5a7596;
  border-radius: 2px;
  background: repeating-linear-gradient(90deg, #7f90a8 0 1px, transparent 1px 3px) 50% 50% / 8px 7px no-repeat, linear-gradient(#f3f6fa, #c0cfe2);
}

/* status bar */
.status-bar {
  display: flex;
  flex: none;
  height: 20px;
  border-top: 1px solid #e6f0fc;
  background: linear-gradient(#cfe0f8, #b3cdf1 35%, #d7e6f9);
}

.ready {
  width: 47px;
  padding-left: 7px;
  border-right: 1px solid #8aaad6;
  line-height: 18px;
}

.status-right {
  display: flex;
  align-items: center;
  gap: 9px;
  margin-left: auto;
  padding: 0 5px 0 6px;
  border-left: 2px solid #7090c0;
  background: linear-gradient(#b6cdee, #8caee0 50%, #9dbce8);
}

.views {
  display: flex;
  height: 18px;
  border: 1px solid #6f8fbd;
  background: #c9daf1;
}

.views button {
  width: 18px;
}

.status-right input {
  width: 100px;
  height: 16px;
  margin: 0 -8px;
  appearance: none;
  background: linear-gradient(#4f72a8, #4f72a8) 0 50% / 100% 1px no-repeat;
}

.status-right input::-webkit-slider-thumb {
  appearance: none;
  width: 9px;
  height: 13px;
  border: 1px solid #4a6ea8;
  border-radius: 1px 1px 5px 5px;
  background: #dfeafa;
}

/* taskbar */
.taskbar {
  position: relative;
  display: flex;
  align-items: center;
  flex: none;
  height: 40px;
  padding-left: 17px;
  background: linear-gradient(90deg, #456e82, #4b7783 15%, #3f6b76 28%, #4a7564 36%, #4b7665 48%, #5f7f80 56%, #45695f 63%, #315f7c 67%, #356d87 85%, #3b6480 92%, #36566f);
}

.wallpaper {
  position: absolute;
  left: 0;
  top: 0;
}

.task {
  position: relative;
  width: 58px;
  height: 38px;
  margin-right: 4px;
  border: 1px solid #86a3af;
  background: rgba(255, 255, 255, 0.15);
}

.task.plain {
  border: none;
  background: none;
}

.stacked {
  width: 54px;
  margin-right: 8px;
  box-shadow: 4px 0 0 -1px #5d8391, 4px 0 0 0 #86a3af;
}

.task.current {
  border-color: #e6eef0;
  background: rgba(255, 255, 255, 0.35);
}

.tray {
  position: relative;
  display: flex;
  align-items: center;
  gap: 9px;
  margin-left: auto;
  padding-right: 26px;
  color: #fff;
  line-height: 17px;
  text-align: center;
}

.tray .tri {
  border-width: 0 4px 4px;
  border-bottom-color: #fff;
  margin-right: 5px;
}

.tray .lang {
  margin: 0 8px 0 7px;
}
```
